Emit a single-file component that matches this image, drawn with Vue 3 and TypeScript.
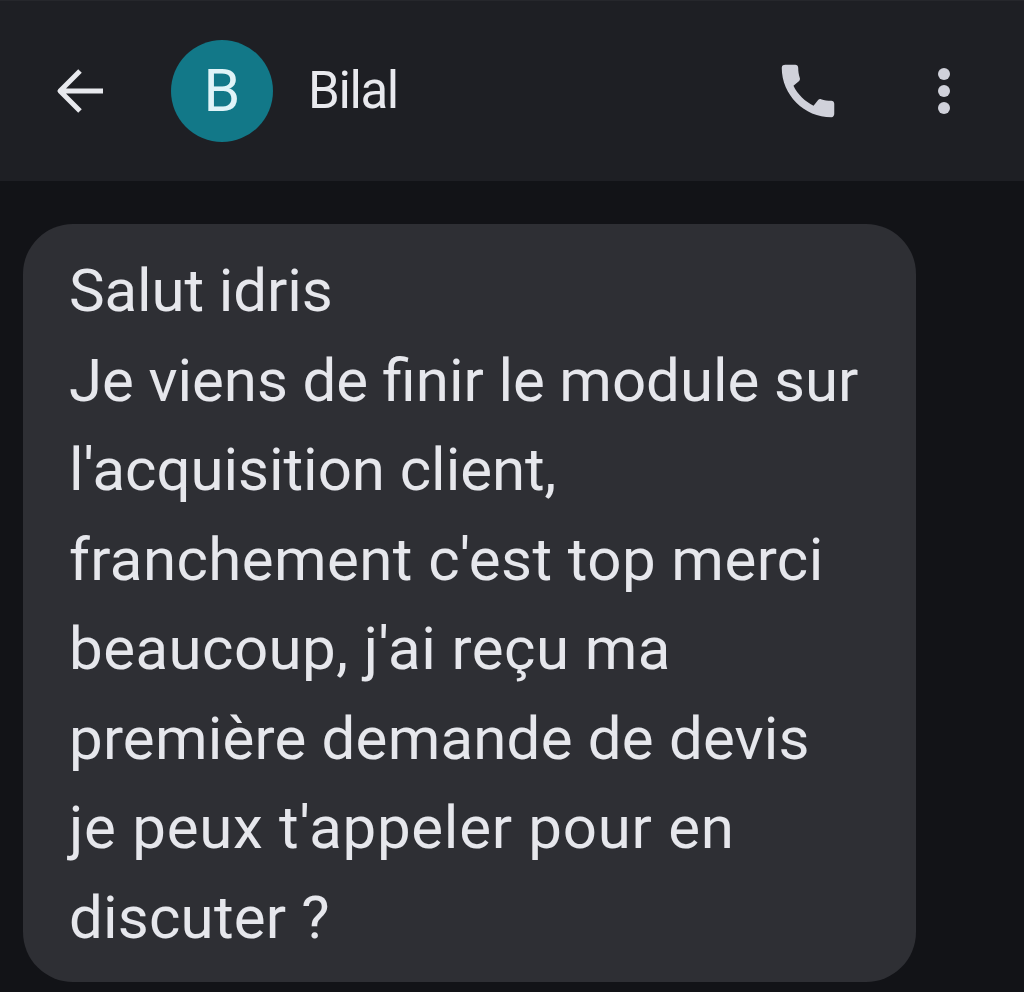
<template>
	<div class="screen">
		<header class="top-bar">
			<button class="icon-button back-button" aria-label="Back">
				<svg width="50" height="46" viewBox="0 0 50 46" fill="none">
					<path d="M47 23H4M24 3 4 23l20 20" stroke="#e8e9ee" stroke-width="5" stroke-linejoin="round" />
				</svg>
			</button>
			<div class="avatar">{{ contactName.charAt(0) }}</div>
			<div class="contact-name">{{ contactName }}</div>
			<button class="icon-button call-button" aria-label="Call">
				<svg width="70" height="70" viewBox="0 0 24 24" fill="#d0d1da">
					<path d="M20.01 15.38c-1.23 0-2.42-.2-3.53-.56-.35-.12-.74-.03-1.01.24l-1.57 1.97c-2.83-1.35-5.48-3.9-6.89-6.83l1.95-1.66c.27-.28.35-.67.24-1.02-.37-1.11-.56-2.3-.56-3.53 0-.54-.45-.99-.99-.99H4.19C3.65 3 3 3.24 3 3.99 3 13.28 10.73 21 20.01 21c.71 0 .99-.63.99-1.18v-3.45c0-.54-.45-.99-.99-.99z" />
				</svg>
			</button>
			<button class="icon-button more-button" aria-label="More options">
				<span v-for="n in 3" :key="n" class="dot"></span>
			</button>
		</header>
		<main class="thread">
			<div class="bubble">
				<div
					v-for="line in messageLines"
					:key="line.text"
					class="bubble-line"
					:style="{ letterSpacing: line.spacing + 'px', wordSpacing: (line.wordGap ?? 0) + 'px' }"
				>
					{{ line.text }}
				</div>
			</div>
		</main>
	</div>
</template>
<script setup lang="ts">
const contactName = "Bilal";

// spacing evens out the width difference with the phone's system font
// (letter spacing would break the fi ligature, so that line uses wordGap)
const messageLines: { text: string; spacing: number; wordGap?: number }[] = [
	{ text: "Salut idris", spacing: -0.1 },
	{ text: "Je viens de finir le module sur", spacing: 0, wordGap: -0.4 },
	{ text: "l'acquisition client,", spacing: -0.05 },
	{ text: "franchement c'est top merci", spacing: 0.42 },
	{ text: "beaucoup, j'ai reçu ma", spacing: 0.45 },
	{ text: "première demande de devis", spacing: 0.2 },
	{ text: "je peux t'appeler pour en", spacing: 0.72 },
	{ text: "discuter ?", spacing: 0.2 },
];
</script>
<style scoped>
.screen {
	width: 1024px;
	height: 992px;
	overflow: hidden;
	background-color: #121317;
	font-family: Roboto, "Liberation Sans", sans-serif;
}

.top-bar {
	height: 181px;
	box-sizing: border-box;
	display: flex;
	align-items: center;
	background-color: #1e1f24;
	border-top: 1px solid #26272c;
}

.icon-button {
	padding: 0;
	border: none;
	background: none;
	display: flex;
}

.back-button {
	margin-left: 56px;
}

.avatar {
	width: 102px;
	height: 102px;
	margin-left: 65px;
	margin-top: -1px;
	border-radius: 50%;
	background-color: #127888;
	color: #e0f4f8;
	font-size: 59px;
	display: flex;
	align-items: center;
	justify-content: center;
}

.contact-name {
	margin-left: 35px;
	margin-top: -2px;
	font-size: 51px;
	letter-spacing: -1.4px;
	color: #e8e9ee;
	flex: 1;
}

.call-button {
	margin-right: 95px;
}

.more-button {
	flex-direction: column;
	gap: 5px;
	margin-right: 74px;
}

.dot {
	width: 12px;
	height: 12px;
	border-radius: 50%;
	background-color: #d0d1da;
}

.thread {
	padding: 43px 0 0 23px;
}

.bubble {
	width: 893px;
	height: 758px;
	box-sizing: border-box;
	padding: 22px 0 0 46px;
	border-radius: 50px;
	background-color: #2e2f34;
	color: #e6e7ec;
	font-size: 60px;
	line-height: 89.5px;
	white-space: nowrap;
}
</style>
